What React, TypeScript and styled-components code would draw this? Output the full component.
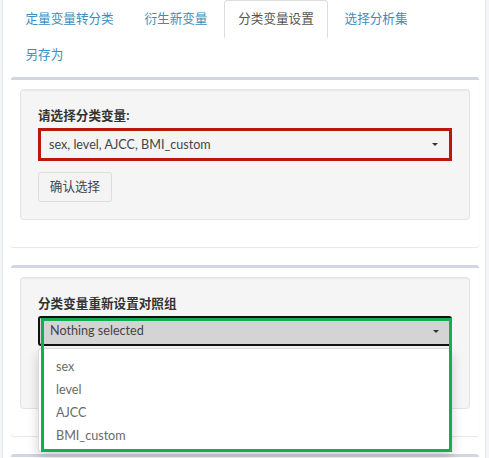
import styled, { createGlobalStyle } from 'styled-components';

const GlobalStyle = createGlobalStyle`
  html, body {
    margin: 0;
    background: #f3f5f8;
  }
  body {
    font-family: Lato, "Noto Sans CJK SC", sans-serif;
    font-size: 12.6px;
    line-height: 1.42857;
    color: #333;
  }
  * {
    box-sizing: border-box;
  }
`;

const Panel = styled.div`
  margin-left: 2px;
  width: 484px;
  min-height: 100vh;
  background: #fff;
  border-left: 1px solid #e4e8ec;
  border-right: 1px solid #e4e8ec;
  padding: 0 6px 0 8px;
  overflow: hidden;
`;

const TabList = styled.ul`
  display: flex;
  flex-wrap: wrap;
  list-style: none;
  margin: 0 0 5px;
  padding: 0;
`;

const TabItem = styled.li`
  margin: 0 1.8px -2px 0;
`;

const TabLink = styled.a<{ $active?: boolean }>`
  display: block;
  padding: 9px 13.5px;
  line-height: 18px;
  border: 1px solid transparent;
  border-radius: 3.6px 3.6px 0 0;
  color: #3c8dbc;
  text-decoration: none;
  cursor: pointer;

  ${({ $active }) =>
    $active &&
    `
    color: #555;
    background: #fff;
    border-color: #ddd #ddd transparent;
  `}
`;

const Box = styled.section`
  background: #fff;
  border-top: 3px solid #d2d6de;
  border-radius: 3px;
  box-shadow: 0 1px 1px rgba(0, 0, 0, 0.1);
  margin-bottom: 18px;
  padding: 9px;
`;

const Well = styled.div`
  background: #f5f5f5;
  border: 1px solid #e3e3e3;
  border-radius: 3.6px;
  box-shadow: inset 0 1px 1px rgba(0, 0, 0, 0.05);
  padding: 17px;
  margin-bottom: 18px;
`;

const Label = styled.label`
  display: block;
  font-weight: 700;
  line-height: 18px;
  margin-bottom: 3px;
  color: #333;
`;

const SelectWrap = styled.div`
  position: relative;
`;

const SelectButton = styled.div<{ $state: 'marked' | 'open' }>`
  display: flex;
  align-items: center;
  justify-content: space-between;
  color: #444;
  line-height: 18px;
  padding: 0 11px 0 ${({ $state }) => ($state === 'marked' ? 8 : 10)}px;
  height: ${({ $state }) => ($state === 'marked' ? 33 : 30)}px;
  background: ${({ $state }) => ($state === 'marked' ? '#f4f4f4' : '#d4d4d4')};
  border: ${({ $state }) => ($state === 'marked' ? '3px solid #bd160b' : '2px solid #111')};
  border-radius: ${({ $state }) => ($state === 'marked' ? 0 : 3)}px;
`;

const Caret = styled.span`
  width: 0;
  height: 0;
  border-left: 3px solid transparent;
  border-right: 3px solid transparent;
  border-top: 3px solid #333;
`;

const Button = styled.button`
  font: inherit;
  line-height: 18px;
  margin-top: 11px;
  padding: 5px 10.8px;
  background: #f4f4f4;
  border: 1px solid #ddd;
  border-radius: 3px;
  color: #444;
`;

const HiddenAction = styled.div`
  height: 45px;
`;

const Menu = styled.ul`
  position: absolute;
  top: 100%;
  left: 0;
  right: 0;
  margin: 2px 0 0;
  padding: 6px 0 4px;
  list-style: none;
  background: #fff;
  border: 1px solid rgba(0, 0, 0, 0.15);
  border-radius: 3.6px;
  box-shadow: 0 6px 12px rgba(0, 0, 0, 0.175);
  z-index: 10;
`;

const MenuItem = styled.li`
  padding: 2.5px 17px;
  line-height: 18px;
  color: #6a6a6a;
`;

const Highlight = styled.div`
  position: absolute;
  top: 2px;
  left: 3px;
  right: 0;
  height: 134px;
  border: 3px solid #12b04c;
  pointer-events: none;
  z-index: 20;
`;

const tabs = ['定量变量转分类', '衍生新变量', '分类变量设置', '选择分析集', '另存为'];
const options = ['sex', 'level', 'AJCC', 'BMI_custom'];

export default function App() {
  return (
    <>
      <GlobalStyle />
      <Panel>
        <TabList>
          {tabs.map((t) => (
            <TabItem key={t}>
              <TabLink $active={t === '分类变量设置'}>{t}</TabLink>
            </TabItem>
          ))}
        </TabList>

        <Box>
          <Well>
            <Label>请选择分类变量:</Label>
            <SelectButton $state="marked">
              <span>sex, level, AJCC, BMI_custom</span>
              <Caret />
            </SelectButton>
            <Button>确认选择</Button>
          </Well>
        </Box>

        <Box>
          <Well>
            <Label>分类变量重新设置对照组</Label>
            <SelectWrap>
              <SelectButton $state="open">
                <span>Nothing selected</span>
                <Caret />
              </SelectButton>
              <Menu>
                {options.map((o) => (
                  <MenuItem key={o}>{o}</MenuItem>
                ))}
              </Menu>
              <Highlight />
            </SelectWrap>
            <HiddenAction />
          </Well>
        </Box>

        <Box>
          <Well>
            <Label>&nbsp;</Label>
          </Well>
        </Box>
      </Panel>
    </>
  );
}
